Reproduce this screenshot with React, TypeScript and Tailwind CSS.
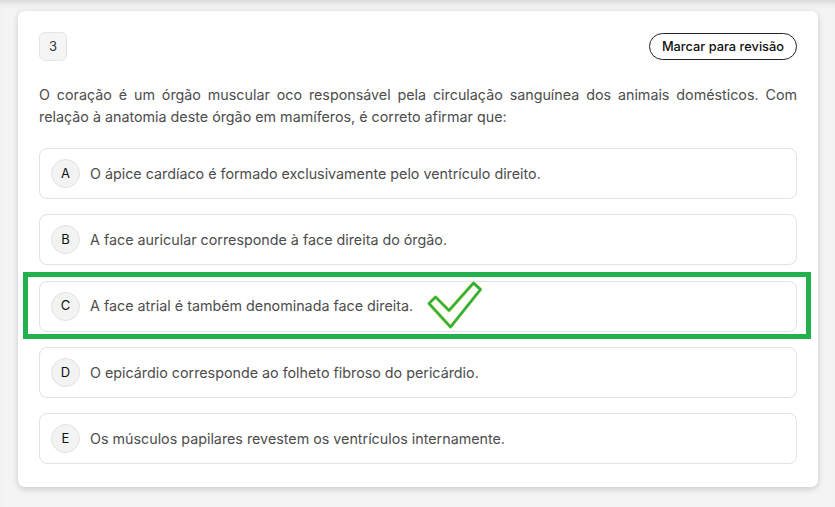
import React from "react";

const options = [
  { l: "A", t: "O ápice cardíaco é formado exclusivamente pelo ventrículo direito." },
  { l: "B", t: "A face auricular corresponde à face direita do órgão." },
  { l: "C", t: "A face atrial é também denominada face direita." },
  { l: "D", t: "O epicárdio corresponde ao folheto fibroso do pericárdio." },
  { l: "E", t: "Os músculos papilares revestem os ventrículos internamente." },
];

function Check() {
  return (
    <svg
      className="absolute left-[385px] top-[-2px]"
      width="60"
      height="52"
      viewBox="0 0 60 52"
      fill="none"
    >
      <path
        d="M4 23.5 L10.5 17 L24 30.5 L48.5 3 L55.5 9.5 L25.5 47 Z"
        stroke="#e3d640"
        strokeWidth="3.4"
        strokeLinejoin="round"
      />
      <path
        d="M4 23.5 L10.5 17 L24 30.5 L48.5 3 L55.5 9.5 L25.5 47 Z"
        stroke="#22b14c"
        strokeWidth="2.4"
        strokeLinejoin="round"
      />
    </svg>
  );
}

export default function App() {
  return (
    <div
      className="min-h-[507px] w-[835px] bg-[#f4f4f4] pt-[11px] pl-[18px] shadow-[inset_0_7px_7px_-5px_rgba(0,0,0,0.14)]"
      style={{ fontFamily: "Inter, 'Noto Sans', sans-serif" }}
    >
      <div className="relative w-[800px] rounded-[7px] bg-white px-[21px] pt-[21px] pb-[23px] shadow-[0_2px_6px_rgba(0,0,0,0.18)]">
        <div className="flex items-center justify-between">
          <div className="flex h-[29px] w-[28px] items-center justify-center rounded-[6px] border border-[#e4e4e4] bg-[#f5f5f5] text-[13px] text-[#333]">
            3
          </div>
          <button className="h-[27px] rounded-full border border-[#222] px-[12px] text-[12.8px] font-medium text-[#111]">
            Marcar para revisão
          </button>
        </div>
        <p className="mt-[23px] text-justify text-[14.3px] leading-[22px] text-[#4d4d4d]">
          O coração é um órgão muscular oco responsável pela circulação sanguínea dos animais domésticos. Com relação à anatomia deste órgão em mamíferos, é correto afirmar que:
        </p>
        <div className="mt-[20px] flex flex-col gap-[15.3px]">
          {options.map((o) => (
            <div
              key={o.l}
              className="relative flex h-[51px] items-center gap-[10px] rounded-[8px] border border-[#e2e2e2] bg-white px-[11px]"
            >
              <div className="flex h-[29px] w-[29px] shrink-0 items-center justify-center rounded-full border border-[#e2e2e2] bg-[#f3f3f3] text-[13px] text-[#111]">
                {o.l}
              </div>
              <span className="text-[14.3px] text-[#4d4d4d]">{o.t}</span>
              {o.l === "C" && (
                <>
                  <div className="pointer-events-none absolute -top-[10px] -bottom-[8px] -left-[17px] -right-[15px] border-[5px] border-[#22b14c]" />
                  <Check />
                </>
              )}
            </div>
          ))}
        </div>
      </div>
    </div>
  );
}
